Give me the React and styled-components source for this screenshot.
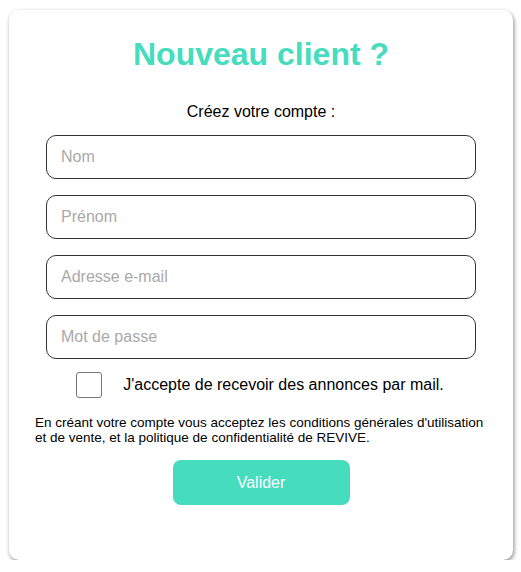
import React from 'react'
import styled, { createGlobalStyle } from 'styled-components'

const GlobalStyle = createGlobalStyle`
body{
    margin:0;
    background:#fff;
    font-family:"Liberation Sans", Arial, sans-serif;
}
`

const Card = styled.div`
box-sizing:border-box;
width:504px;
height:550px;
margin:10px 0 0 9px;
padding:26px 26px 0 26px;
background:#fff;
border-radius:10px;
box-shadow:1px 2px 4px rgba(0,0,0,0.45);
display:flex;
flex-direction:column;
align-items:center;
`

const Title = styled.h1`
margin:0;
font-size:32px;
line-height:37px;
font-weight:bold;
color:#46dcbe;
`

const Subtitle = styled.p`
margin:30px 0 0 0;
font-size:16px;
line-height:18px;
color:#000;
`

const Fields = styled.div`
margin-top:14px;
display:flex;
flex-direction:column;
gap:16px;
`

const Input = styled.input`
box-sizing:border-box;
width:430px;
height:44px;
padding:0 14px;
border:1px solid #333;
border-radius:10px;
font-family:"Liberation Sans", Arial, sans-serif;
font-size:16px;
outline:none;
&::placeholder{
    color:#a9a9a9;
}
`

const CheckRow = styled.label`
margin:13px 2px 0 0;
display:flex;
align-items:center;
gap:21px;
font-size:16px;
color:#000;
`

const Box = styled.span`
box-sizing:border-box;
width:26px;
height:26px;
border:1px solid #767676;
border-radius:3px;
background:#fff;
`

const Legal = styled.p`
align-self:stretch;
margin:17px 0 0 0;
font-size:13.5px;
line-height:15px;
color:#000;
`

const Button = styled.button`
margin-top:15px;
width:177px;
height:45px;
border:none;
border-radius:8px;
background:#46dcbe;
color:#fff;
font-family:"Liberation Sans", Arial, sans-serif;
font-size:16px;
cursor:pointer;
`

const fields = ['Nom', 'Prénom', 'Adresse e-mail', 'Mot de passe']

const App = () => {
    return (
        <>
            <GlobalStyle />
            <Card>
                <Title>Nouveau client ?</Title>
                <Subtitle>Créez votre compte :</Subtitle>
                <Fields>
                    {fields.map((f) => (
                        <Input key={f} placeholder={f} type={f === 'Mot de passe' ? 'password' : 'text'} />
                    ))}
                </Fields>
                <CheckRow>
                    <Box />
                    J'accepte de recevoir des annonces par mail.
                </CheckRow>
                <Legal>
                    En créant votre compte vous acceptez les conditions générales d'utilisation et de vente, et la politique de confidentialité de REVIVE.
                </Legal>
                <Button>Valider</Button>
            </Card>
        </>
    )
}

export default App
